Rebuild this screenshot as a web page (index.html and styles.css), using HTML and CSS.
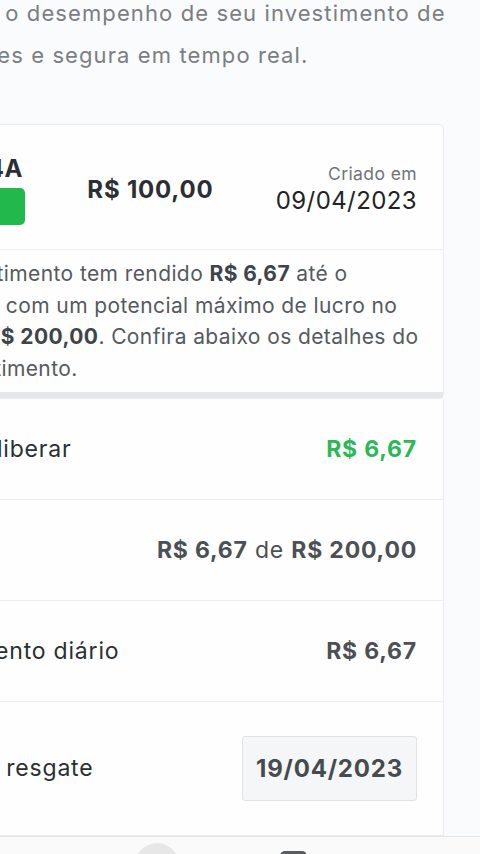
FILE: index.html
```html
<!DOCTYPE html>
<html lang="pt-BR">
  <head>
    <meta charset="UTF-8" />
    <meta name="viewport" content="width=device-width, initial-scale=1.0" />
    <title>Meu investimento</title>
    <link rel="stylesheet" href="styles.css">
  </head>

  <body>
    <div class="page">
      <p class="intro">
        Acompanhe o desempenho de seu investimento de<br />
        forma simples e segura em tempo real.
      </p>

      <div class="card">
        <div class="card-header">
          <div class="plan">
            <span class="plan-id">ID 9B4A</span>
            <span class="badge">Ativo</span>
          </div>
          <div class="amount">R$ 100,00</div>
          <div class="created">
            <span class="created-label">Criado em</span>
            <span class="created-date">09/04/2023</span>
          </div>
        </div>
        <p class="summary">
          Seu investimento tem rendido <strong>R$ 6,67</strong> até o<br />
          momento, com um potencial máximo de lucro no<br />
          valor de <strong>R$ 200,00</strong>. Confira abaixo os detalhes do<br />
          seu investimento.
        </p>
      </div>

      <div class="card details">
        <div class="row">
          <span class="label">Valor a liberar</span>
          <span class="value green">R$ 6,67</span>
        </div>
        <div class="row">
          <span class="label">Lucro</span>
          <span class="value"><strong>R$ 6,67</strong> de <strong>R$ 200,00</strong></span>
        </div>
        <div class="row">
          <span class="label">Rendimento diário</span>
          <span class="value"><strong>R$ 6,67</strong></span>
        </div>
        <div class="row row-tall">
          <span class="label">Data do resgate</span>
          <span class="date-box">19/04/2023</span>
        </div>
      </div>
    </div>

    <nav class="bottom-nav">
      <span class="nav-circle"></span>
      <span class="nav-square"></span>
    </nav>
  </body>
</html>
```

FILE: styles.css
```css
html,
body {
  margin: 0;
  padding: 0;
}

body {
  font-family: Inter, "Noto Sans", sans-serif;
  background-color: #fafbfc;
  color: #2b2f33;
  width: 480px;
  height: 854px;
  overflow: hidden;
}

.page {
  margin-left: -115px;
  width: 559px;
}

.intro {
  margin: -8px 0 0 -22px;
  font-size: 22px;
  letter-spacing: 1.1px;
  line-height: 42px;
  color: #7b7e82;
  white-space: nowrap;
}

.card {
  margin-top: 48px;
  background-color: #fefefe;
  border: 1px solid #eaecef;
  border-radius: 5px;
}

.card-header {
  display: flex;
  align-items: center;
  justify-content: space-between;
  height: 124px;
  padding: 0 26px;
  border-bottom: 1px solid #eceef0;
}

.plan {
  display: flex;
  flex-direction: column;
  gap: 6px;
  width: 113px;
  margin-top: 6px;
}

.plan-id {
  font-size: 24px;
  font-weight: 700;
  line-height: 26px;
  letter-spacing: 0.5px;
  text-align: right;
  padding-right: 2px;
}

.badge {
  background-color: #22b84c;
  color: #ffffff;
  border-radius: 5px;
  height: 37px;
  line-height: 37px;
  text-align: center;
  font-size: 16px;
  font-weight: 600;
}

.amount {
  font-size: 24px;
  font-weight: 700;
  color: #2b2f33;
  letter-spacing: 0.8px;
  margin-top: 4px;
}

.created {
  display: flex;
  flex-direction: column;
  align-items: flex-end;
  margin-top: 4px;
}

.created-label {
  font-size: 17.5px;
  letter-spacing: 0.4px;
  color: #707478;
  line-height: 24px;
}

.created-date {
  font-size: 24px;
  letter-spacing: 0.4px;
  color: #1f2326;
  line-height: 30px;
}

.summary {
  margin: 0;
  padding: 8px 26px 7px 11px;
  font-size: 21px;
  letter-spacing: 0.4px;
  line-height: 31.7px;
  color: #555a60;
  white-space: nowrap;
  border-bottom: 6px solid #e6e7e9;
}

.summary strong {
  color: #3f4448;
}

.details {
  margin-top: 0;
  border-top: none;
  border-radius: 0;
}

.row {
  display: flex;
  align-items: center;
  justify-content: space-between;
  height: 100px;
  padding: 0 26px 0 23px;
  border-bottom: 1px solid #eceef0;
  font-size: 23px;
  letter-spacing: 0.8px;
}

.row:last-child {
  border-bottom: none;
}

.row-tall {
  height: 133px;
}

.label {
  color: #2b2f33;
}

.value {
  color: #4b5055;
}

.value strong,
.green {
  font-weight: 700;
}

.green {
  color: #2cb857;
}

.date-box {
  width: 173px;
  height: 63px;
  line-height: 63px;
  text-align: center;
  background-color: #f5f6f7;
  border: 1px solid #e0e2e5;
  border-radius: 3px;
  font-size: 24px;
  letter-spacing: 0.8px;
  font-weight: 700;
  color: #464b50;
}

.bottom-nav {
  display: flex;
  align-items: flex-start;
  gap: 101px;
  height: 60px;
  padding: 6px 0 0 135px;
  background-color: #fafafa;
  border-top: 1px solid #e4e5e7;
}

.nav-circle {
  width: 44px;
  height: 44px;
  border-radius: 50%;
  background-color: #e7e7e8;
}

.nav-square {
  width: 27px;
  height: 24px;
  margin-top: 8px;
  border-radius: 5px;
  background-color: #5a5c5f;
}
```
